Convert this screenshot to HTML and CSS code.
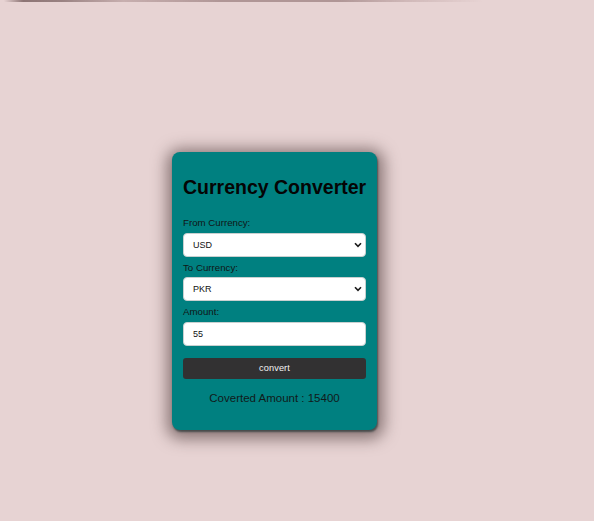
FILE: index.html
```html
<!DOCTYPE html>
<html lang="en">
<head>
<meta charset="utf-8">
<title>Currency Converter</title>
<link rel="stylesheet" href="styles.css">
</head>
<body>
<div class="top-line"></div>
<main class="card">
  <h1 class="title">Currency Converter</h1>
  <label class="field-label" for="from">From Currency:</label>
  <div class="select-wrap">
    <select id="from" class="field select">
      <option>USD</option>
    </select>
    <svg class="chevron" width="8" height="6" viewBox="0 0 8 6" aria-hidden="true"><path d="M1 1.2 L4 4.4 L7 1.2" fill="none" stroke="#1a1a1a" stroke-width="1.6"/></svg>
  </div>
  <label class="field-label" for="to">To Currency:</label>
  <div class="select-wrap">
    <select id="to" class="field select">
      <option>PKR</option>
    </select>
    <svg class="chevron" width="8" height="6" viewBox="0 0 8 6" aria-hidden="true"><path d="M1 1.2 L4 4.4 L7 1.2" fill="none" stroke="#1a1a1a" stroke-width="1.6"/></svg>
  </div>
  <label class="field-label" for="amount">Amount:</label>
  <input id="amount" class="field" type="text" value="55">
  <button class="convert-btn" type="button">convert</button>
  <p class="result">Coverted Amount : 15400</p>
</main>
</body>
</html>
```
FILE: styles.css
```css
html, body {
  margin: 0;
  padding: 0;
}
body {
  background: #e7d3d3;
  font-family: "Liberation Sans", Arial, sans-serif;
  min-height: 521px;
}
.top-line {
  height: 2px;
  width: 478px;
  margin-left: 4px;
  background: linear-gradient(to right,
    rgba(120, 95, 95, 0) 0%,
    rgba(110, 85, 85, 0.75) 4%,
    rgba(120, 95, 95, 0.7) 12%,
    rgba(160, 130, 130, 0.45) 25%,
    rgba(140, 110, 110, 0.6) 45%,
    rgba(140, 110, 110, 0.6) 70%,
    rgba(170, 140, 140, 0.35) 85%,
    rgba(200, 170, 170, 0) 100%);
  filter: blur(0.4px);
}
.card {
  box-sizing: border-box;
  width: 205px;
  margin: 150px 0 0 172px;
  padding: 1px 11px 25px;
  background: #008080;
  border-radius: 8px;
  box-shadow: 1px 2px 2px rgba(20, 40, 40, 0.6), 1px 3px 15px 6px rgba(60, 40, 40, 0.55);
}
.title {
  margin: 23px 0 18px;
  font-size: 19.5px;
  line-height: 23px;
  font-weight: bold;
  color: #050505;
  white-space: nowrap;
}
.field-label {
  display: block;
  font-size: 9.7px;
  line-height: 12px;
  color: #101515;
  margin-bottom: 3.5px;
}
.select-wrap {
  position: relative;
}
.chevron {
  position: absolute;
  right: 4px;
  top: 9px;
  pointer-events: none;
}
.field {
  display: block;
  box-sizing: border-box;
  width: 100%;
  height: 24px;
  margin: 0 0 5px;
  padding: 0 0 0 9px;
  font-family: "Liberation Sans", Arial, sans-serif;
  font-size: 9px;
  color: #111;
  background-color: #fff;
  border: 1px solid #c9d0d0;
  border-radius: 4px;
  outline: none;
}
.select {
  appearance: none;
  -webkit-appearance: none;
  padding-left: 9px;
}
.convert-btn {
  display: block;
  width: 100%;
  height: 21px;
  margin-top: 12px;
  padding: 0;
  border: none;
  border-radius: 3px;
  background: #323132;
  color: #f2f2f2;
  font-family: "Liberation Sans", Arial, sans-serif;
  font-size: 9.2px;
  letter-spacing: 0.1px;
}
.result {
  margin: 12px 0 0;
  text-align: center;
  font-size: 11.5px;
  line-height: 14px;
  color: #111a1a;
}
```
